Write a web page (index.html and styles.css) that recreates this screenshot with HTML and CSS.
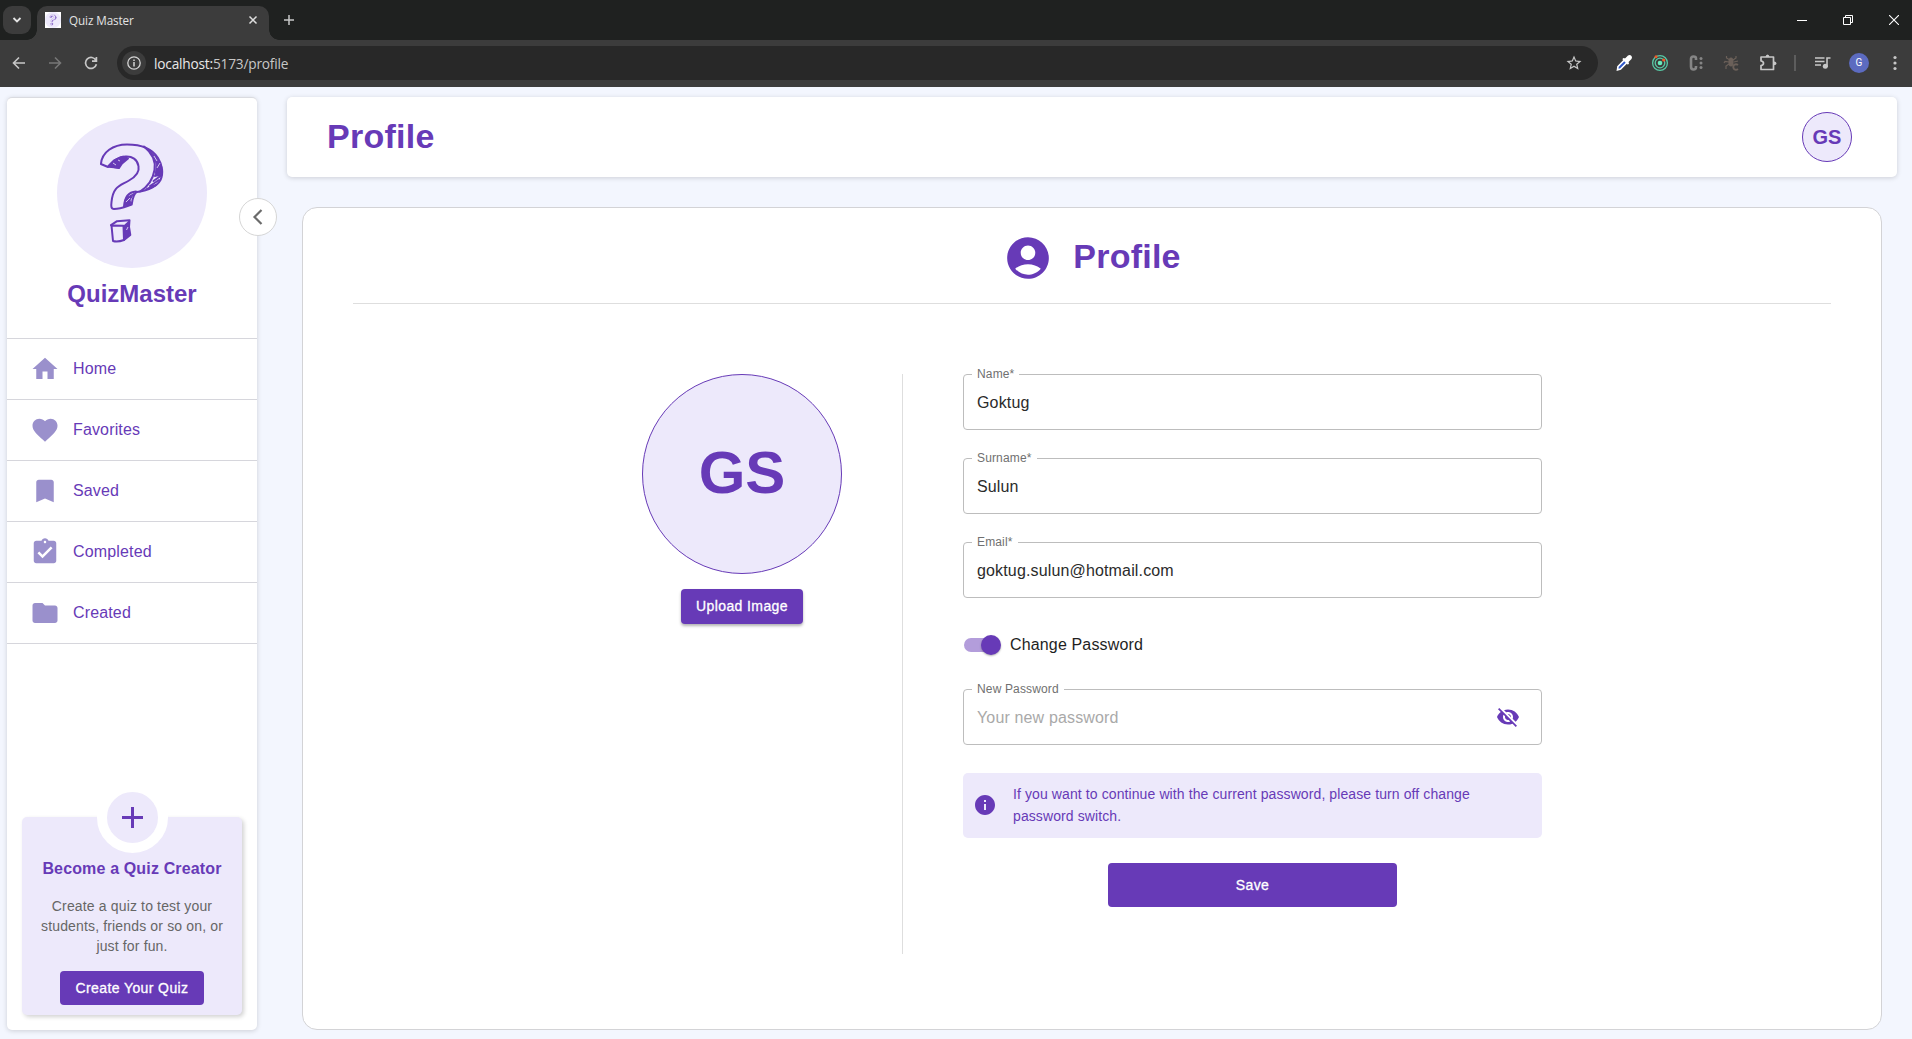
FILE: index.html
```html
<!DOCTYPE html>
<html lang="en">
<head>
<meta charset="utf-8">
<title>Quiz Master</title>
<link rel="stylesheet" href="styles.css">
</head>
<body>
<svg class="defs" aria-hidden="true">
  <symbol id="logo" viewBox="0 0 150 150">
    <circle cx="75" cy="75" r="75" fill="#ede9fb"/>
    <g fill="none" stroke="#673ab7" stroke-width="2" stroke-linejoin="round" stroke-linecap="round">
      <path d="M43.9 46C45 34 56 26.600 70 26.500C86 26.500 96 32 101 40C105.500 47 106.500 56 103.500 62C99 70 90 72.500 80 74C77 75 76.500 79 75.500 82L74.700 86.500C70 88 64 91 57 91C54 91 54 88 54.500 84C56 68 63 68 72 62.500C80 58 82.500 53 81.500 48C80.500 41.500 75 38 68.500 38.500C60 39 57 43 51 49Z"/>
      <path d="M87 28.500C95 35 99 43 97.500 52C96 61 92 68 83 73.500"/>
      <path d="M79 73.500C72 74 67.500 78 67 89"/>
      <path d="M51.500 48L57 42.500L66 38.700L71 40.500L65 45.500L62 50Z" fill="#673ab7"/>
      <path d="M52 48.700L62 49.700"/>
      <path d="M91 31L99 38.500L105 49L104 58L98 58L99.500 47L97 39Z" fill="#673ab7" stroke-width="1"/>
      <path d="M98 58L104.500 54M96.500 63L103.500 58M93 68L102 62M90 71L99 67" stroke-width="2"/>
      <path d="M69 80L77 75.500L73 82L74 86.500L67.500 88Z" fill="#673ab7" stroke-width="1"/>
      <path d="M54.500 107.500L66.500 107.800L67 122C63 123.500 59 124 56 123Z"/>
      <path d="M54 107.200L60 103.200L72.500 102.200L72 109L73.300 117L67 122"/>
      <path d="M67 108L72 103.500L72 117.500L67.500 121Z" fill="#673ab7" stroke-width="1.500"/>
    </g>
    <g stroke="#ede9fb" stroke-width=".8" fill="none">
      <path d="M56 45L59 47M61 42L63 43M97 38L100 43M100 50L103 45M69 84L73 80M69.500 112L71 109"/>
    </g>
  </symbol>
</svg>

<header class="browser">
  <div class="tabstrip">
    <button class="tab-search"><svg width="10" height="10" viewBox="0 0 10 10"><path d="M1.500 3L5 6.500L8.500 3" fill="none" stroke="#e3e3e3" stroke-width="1.800"/></svg></button>
    <div class="tab">
      <span class="favicon"><svg width="16" height="16"><use href="#logo"/></svg></span>
      <span class="tab-title">Quiz Master</span>
      <svg width="10" height="10" viewBox="0 0 10 10"><path d="M1.500 1.500L8.500 8.500M8.500 1.500L1.500 8.500" stroke="#dedede" stroke-width="1.500"/></svg>
    </div>
    <svg class="new-tab" width="12" height="12" viewBox="0 0 12 12"><path d="M6 1V11M1 6H11" stroke="#c7c7c7" stroke-width="1.500"/></svg>
    <div class="window-controls">
      <svg width="10" height="10" viewBox="0 0 10 10"><path d="M0 5.500H10" stroke="#fff"/></svg>
      <svg width="10" height="10" viewBox="0 0 10 10"><path d="M.5 2.500H7.500V9.500H.5ZM2.500 2.500V.5H9.500V7.500H7.500" fill="none" stroke="#fff"/></svg>
      <svg width="10" height="10" viewBox="0 0 10 10"><path d="M0 0L10 10M10 0L0 10" stroke="#fff" stroke-width="1.100"/></svg>
    </div>
  </div>
  <div class="toolbar">
    <div class="nav-buttons">
      <svg width="14" height="14" viewBox="0 0 14 14"><path d="M13 7H2M7 1.500L1.500 7L7 12.500" fill="none" stroke="#c7c7c7" stroke-width="1.600"/></svg>
      <svg width="14" height="14" viewBox="0 0 14 14"><path d="M1 7H12M7 1.500L12.500 7L7 12.500" fill="none" stroke="#777" stroke-width="1.600"/></svg>
      <svg width="14" height="14" viewBox="0 0 14 14"><path d="M12 4.500A5.500 5.500 0 1 0 12.400 8.300M12.400 1V5.200H8" fill="none" stroke="#c7c7c7" stroke-width="1.700"/></svg>
    </div>
    <div class="omnibox">
      <span class="site-info"><svg width="14" height="14" viewBox="0 0 14 14"><circle cx="7" cy="7" r="6.200" fill="none" stroke="#d5d5d5" stroke-width="1.300"/><path d="M7 6V10.500M7 3.400V5" stroke="#d5d5d5" stroke-width="1.500"/></svg></span>
      <span class="url">localhost:<span class="url-path">5173/profile</span></span>
      <svg width="18" height="18" viewBox="0 0 24 24" class="star"><path fill="#c7c7c7" d="m22 9.240-7.190-.62L12 2 9.190 8.630 2 9.240l5.460 4.730L5.820 21 12 17.270 18.180 21l-1.630-7.030zM12 15.400l-3.760 2.270 1-4.280-3.320-2.880 4.380-.38L12 6.100l1.710 4.040 4.380.38-3.320 2.880 1 4.280z"/></svg>
    </div>
    <div class="extensions">
      <svg width="18" height="18" viewBox="0 0 18 18"><path d="M3 12.500L10 5.500L12.500 8L5.500 15L2.500 15.800Z" fill="#2f58c9" stroke="#fff" stroke-width="1.600"/><path d="M8 4L10 4.500L13 1.500Q15 .5 16.500 2Q17.500 3.500 16.500 5L13.500 8L14 10L12.500 10.500L7.500 5.500Z" fill="#fff"/></svg>
      <svg width="18" height="18" viewBox="0 0 18 18"><g fill="none" stroke="#58c9a5" stroke-width="1.300"><circle cx="9" cy="9" r="7.400"/><circle cx="9" cy="9" r="4.800"/></g><circle cx="9" cy="9" r="2.300" fill="#68eaba"/><circle cx="5" cy="2.700" r="1.500" fill="#f05a28"/><circle cx="12.700" cy="6" r="1.600" fill="#f05a28"/></svg>
      <svg width="18" height="18" viewBox="0 0 18 18"><path d="M9 6V4.500Q9 2.500 6.500 2.500Q4 2.500 4 5V12.500Q4 15.500 6.500 15.500Q9 15.500 9 13V12" fill="none" stroke="#858585" stroke-width="2.600"/><g fill="#858585"><circle cx="14" cy="4.500" r="1.500"/><circle cx="14" cy="9" r="1.500"/><circle cx="14" cy="13.500" r="1.500"/></g></svg>
      <svg width="18" height="18" viewBox="0 0 18 18"><g fill="none" stroke="#6b6059" stroke-width="1.200"><path d="M7 6L3.500 4V2M6 8L2 7.500L1 9M6 10L3 12V15M10 6L13 4V2M11 8L15 7"/><path d="M15 11Q13 9.500 11 11Q9.500 13 11 15Q13 16.500 15 15" stroke-width="1.800"/></g><ellipse cx="8" cy="8" rx="2.600" ry="4.500" fill="#6b6059"/></svg>
      <svg width="18" height="18" viewBox="0 0 18 18"><path d="M2 3H14.500V15.500H2V11.500Q4.500 11 4.500 9.200Q4.500 7.300 2 7Z" fill="none" stroke="#c7c7c7" stroke-width="1.700" stroke-linejoin="round"/><path d="M6.500 3Q6.800.5 8.500.5Q10.300.5 10.500 3ZM14.500 7.200Q17.500 7.500 17.500 9.200Q17.500 11 14.500 11.200Z" fill="#c7c7c7"/></svg>
    </div>
    <i class="toolbar-divider"></i>
    <svg class="media" width="16" height="14" viewBox="0 0 16 14"><path d="M0 2H9.500M0 5.500H9.500M0 9H6M12 11V2H15.500" fill="none" stroke="#c7c7c7" stroke-width="1.600"/><circle cx="10.300" cy="10.300" r="2.500" fill="#c7c7c7"/></svg>
    <span class="account">G</span>
    <svg width="4" height="16" viewBox="0 0 4 16" fill="#c7c7c7"><circle cx="2" cy="2.500" r="1.600"/><circle cx="2" cy="8" r="1.600"/><circle cx="2" cy="13.500" r="1.600"/></svg>
  </div>
</header>

<div class="app">
  <aside class="sidebar">
    <div class="brand">
      <svg width="150" height="150"><use href="#logo"/></svg>
      <h2>QuizMaster</h2>
    </div>
    <nav class="menu">
      <a><svg viewBox="0 0 24 24"><path d="M10 20v-6h4v6h5v-8h3L12 3 2 12h3v8z"/></svg>Home</a>
      <a><svg viewBox="0 0 24 24"><path d="m12 21.350-1.450-1.320C5.400 15.360 2 12.280 2 8.500 2 5.420 4.420 3 7.500 3c1.740 0 3.410.81 4.500 2.090C13.090 3.810 14.760 3 16.500 3 19.580 3 22 5.420 22 8.500c0 3.780-3.400 6.860-8.550 11.540z"/></svg>Favorites</a>
      <a><svg viewBox="0 0 24 24"><path d="M17 3H7c-1.100 0-1.990.9-1.990 2L5 21l7-3 7 3V5c0-1.100-.9-2-2-2"/></svg>Saved</a>
      <a><svg viewBox="0 0 24 24"><path d="M19 3h-4.180C14.400 1.840 13.300 1 12 1c-1.300 0-2.400.84-2.820 2H5c-1.100 0-2 .9-2 2v14c0 1.100.9 2 2 2h14c1.100 0 2-.9 2-2V5c0-1.100-.9-2-2-2m-7 0c.55 0 1 .45 1 1s-.45 1-1 1-1-.45-1-1 .45-1 1-1m-2 14-4-4 1.410-1.410L10 14.170l6.590-6.590L18 9z"/></svg>Completed</a>
      <a><svg viewBox="0 0 24 24"><path d="M10 4H4c-1.100 0-1.990.9-1.990 2L2 18c0 1.100.9 2 2 2h16c1.100 0 2-.9 2-2V8c0-1.100-.9-2-2-2h-8z"/></svg>Created</a>
    </nav>
    <section class="creator">
      <span class="creator-plus"><svg width="21" height="21" viewBox="0 0 21 21"><path d="M10.500 0V21M0 10.500H21" stroke="#673ab7" stroke-width="3"/></svg></span>
      <h3>Become a Quiz Creator</h3>
      <p>Create a quiz to test your students, friends or so on, or just for fun.</p>
      <button class="btn btn-create">Create Your Quiz</button>
    </section>
    <button class="collapse"><svg width="12" height="18" viewBox="0 0 12 18"><path d="M9.500 2L2.500 9L9.500 16" fill="none" stroke="#6b6b6b" stroke-width="2.200"/></svg></button>
  </aside>

  <main class="content">
    <div class="topbar">
      <h1>Profile</h1>
      <span class="avatar avatar-small">GS</span>
    </div>
    <section class="card">
      <div class="card-title">
        <svg width="50" height="50" viewBox="0 0 24 24"><path fill="#673ab7" d="M12 2C6.480 2 2 6.480 2 12s4.480 10 10 10 10-4.480 10-10S17.520 2 12 2m0 4c1.930 0 3.500 1.570 3.500 3.500S13.930 13 12 13s-3.500-1.570-3.500-3.500S10.070 6 12 6m0 14c-2.030 0-4.430-.82-6.140-2.880C7.550 15.800 9.680 15 12 15s4.450.8 6.140 2.120C16.430 19.180 14.030 20 12 20"/></svg>
        <h1>Profile</h1>
      </div>
      <div class="card-body">
        <div class="photo">
          <span class="avatar avatar-large">GS</span>
          <button class="btn btn-upload">Upload Image</button>
        </div>
        <form class="form">
          <div class="field"><label>Name*</label><span>Goktug</span></div>
          <div class="field"><label>Surname*</label><span>Sulun</span></div>
          <div class="field"><label>Email*</label><span>goktug.sulun@hotmail.com</span></div>
          <div class="toggle"><span class="switch"></span>Change Password</div>
          <div class="field"><label>New Password</label><span class="placeholder">Your new password</span>
            <svg width="24" height="24" viewBox="0 0 24 24"><path fill="#673ab7" d="M12 7c2.760 0 5 2.240 5 5 0 .65-.13 1.260-.36 1.830l2.920 2.920c1.510-1.260 2.700-2.890 3.430-4.750-1.730-4.390-6-7.500-11-7.500-1.400 0-2.740.25-3.980.7l2.160 2.160C10.740 7.130 11.350 7 12 7M2 4.270l2.280 2.280.46.46C3.080 8.300 1.780 10.020 1 12c1.730 4.390 6 7.500 11 7.500 1.550 0 3.030-.3 4.380-.84l.42.42L19.730 22 21 20.730 3.270 3zM7.530 9.800l1.550 1.550c-.05.21-.08.43-.08.65 0 1.660 1.340 3 3 3 .22 0 .44-.03.65-.08l1.550 1.550c-.67.33-1.410.53-2.200.53-2.760 0-5-2.240-5-5 0-.79.2-1.530.53-2.200m4.310-.78 3.150 3.150.02-.16c0-1.660-1.340-3-3-3z"/></svg>
          </div>
          <div class="alert">
            <svg width="24" height="24" viewBox="0 0 24 24"><path fill="#673ab7" d="M12 2C6.480 2 2 6.480 2 12s4.480 10 10 10 10-4.480 10-10S17.520 2 12 2m1 15h-2v-6h2zm0-8h-2V7h2z"/></svg>
            <p>If you want to continue with the current password, please turn off change password switch.</p>
          </div>
          <button class="btn btn-save" type="button">Save</button>
        </form>
      </div>
    </section>
  </main>
</div>
</body>
</html>
```
FILE: styles.css
```css
* { box-sizing: border-box; }

body {
  margin: 0;
  height: 1039px;
  overflow: hidden;
  display: flex;
  flex-direction: column;
  background: #f3f6fe;
  font-family: "Liberation Sans", Arial, sans-serif;
  font-size: 16px;
}

h1, h2, h3, p { margin: 0; }
button { border: 0; padding: 0; font-family: inherit; }
svg { display: block; flex: none; }
.defs { position: absolute; width: 0; height: 0; }

/* Browser frame */
.browser { flex: none; height: 87px; font-family: "Open Sans", "Noto Sans", sans-serif; }
.tabstrip {
  height: 40px;
  display: flex;
  align-items: center;
  background: #1f2120;
  padding-left: 3px;
}
.tab-search {
  width: 28px;
  height: 28px;
  border-radius: 9px;
  background: #3c3c3c;
  display: grid;
  place-items: center;
}
.tab {
  position: relative;
  align-self: flex-end;
  width: 232px;
  height: 34px;
  margin-left: 6px;
  padding: 0 11px 6px 8px;
  display: flex;
  align-items: center;
  background: #3c3c3c;
  border-radius: 10px 10px 0 0;
}
.tab::before, .tab::after {
  content: "";
  position: absolute;
  bottom: 0;
  width: 10px;
  height: 10px;
}
.tab::before { left: -10px; background: radial-gradient(circle at 0 0, transparent 9.5px, #3c3c3c 10px); }
.tab::after { right: -10px; background: radial-gradient(circle at 100% 0, transparent 9.5px, #3c3c3c 10px); }
.favicon { background: #fff; }
.tab-title { flex: 1; margin-left: 8px; font-size: 11.7px; line-height: 16px; color: #e3e3e3; letter-spacing: -.1px; }
.new-tab { margin-left: 14px; }
.window-controls { margin-left: auto; display: flex; gap: 36px; padding-right: 13px; }

.toolbar {
  height: 47px;
  display: flex;
  align-items: center;
  background: #3c3c3c;
  padding: 0 15px 1px 12px;
}
.nav-buttons { display: flex; gap: 22px; }
.omnibox {
  flex: 1;
  height: 34px;
  margin-left: 19px;
  padding: 0 15px 0 5px;
  border-radius: 17px;
  background: #282828;
  display: flex;
  align-items: center;
}
.site-info {
  width: 24px;
  height: 24px;
  border-radius: 50%;
  background: #3c3c3c;
  display: grid;
  place-items: center;
}
.url { flex: 1; margin-left: 8px; font-size: 13.7px; color: #e8e8e8; letter-spacing: -.2px; }
.url-path { color: #c7c7c7; }
.extensions { display: flex; gap: 18px; margin-left: 17px; }
.toolbar-divider { width: 2px; height: 16px; background: #5d5d5d; margin-left: 17px; }
.media { margin-left: 19px; }
.account {
  width: 20px;
  height: 20px;
  margin: 0 24px 0 18px;
  border-radius: 50%;
  background: #5c6bc0;
  color: #fff;
  font: 10px/20px Roboto, sans-serif;
  text-align: center;
}

/* Application shell */
.app { flex: 1; display: flex; gap: 30px; padding: 10px 15px 9px 7px; }

.sidebar {
  position: relative;
  width: 250px;
  display: flex;
  flex-direction: column;
  background: #fff;
  border-top: 1px solid #dadbe0;
  border-radius: 5px;
  box-shadow: 0 1px 5px rgba(0, 0, 0, .16);
}
.brand {
  height: 241px;
  padding-top: 20px;
  display: flex;
  flex-direction: column;
  align-items: center;
  border-bottom: 1px solid #d6d6dc;
}
.brand h2 { margin-top: 10px; font-size: 24px; line-height: 32px; color: #673ab7; }
.menu a {
  height: 61px;
  padding-left: 23px;
  display: flex;
  align-items: center;
  gap: 13px;
  border-bottom: 1px solid #d6d6dc;
  color: #673ab7;
  letter-spacing: .15px;
}
.menu svg { width: 30px; height: 30px; fill: #9a90cc; }
.collapse {
  position: absolute;
  left: 232px;
  top: 100px;
  width: 38px;
  height: 38px;
  border: 1px solid #d6d6d6;
  border-radius: 50%;
  background: #fff;
  display: grid;
  place-items: center;
}
.creator {
  position: relative;
  width: 220px;
  height: 198px;
  margin: auto auto 15px;
  padding: 45px 17px 10px;
  display: flex;
  flex-direction: column;
  align-items: center;
  text-align: center;
  background: #ede9fb;
  border-radius: 5px;
  box-shadow: 2px 2px 4px rgba(0, 0, 0, .18);
}
.creator-plus {
  position: absolute;
  left: 74.5px;
  top: -35px;
  width: 71px;
  height: 71px;
  border: 10px solid #fff;
  border-radius: 50%;
  background: #ede9fb;
  display: grid;
  place-items: center;
}
.creator h3 { font-size: 16px; line-height: 14px; color: #673ab7; letter-spacing: .15px; white-space: nowrap; }
.creator p { margin-top: 20px; font-size: 14px; line-height: 20px; letter-spacing: .15px; color: #666; }

.btn {
  border-radius: 4px;
  background: #673ab7;
  color: #fff;
  font-size: 14px;
  letter-spacing: .4px;
  white-space: nowrap;
  -webkit-text-stroke: .3px #fff;
}
.btn-create { flex: none; width: 144px; height: 34px; margin-top: auto; }
.btn-upload { width: 122px; height: 35px; padding-bottom: 2px; box-shadow: 0 2px 3px rgba(0, 0, 0, .3); }
.btn-save { display: block; width: 289px; height: 44px; margin: 25px auto 0; }

/* Page content */
.content { flex: 1; display: flex; flex-direction: column; gap: 30px; }
h1 { font-size: 34px; line-height: 42px; letter-spacing: .25px; color: #673ab7; }
.topbar {
  flex: none;
  height: 80px;
  padding: 0 45px 0 40px;
  display: flex;
  align-items: center;
  justify-content: space-between;
  background: #fff;
  border-radius: 5px;
  box-shadow: 0 1px 5px rgba(0, 0, 0, .16);
}
.topbar h1 { padding-bottom: 3px; }
.avatar {
  display: grid;
  place-items: center;
  border: 1px solid #673ab7;
  border-radius: 50%;
  background: #ede9fb;
  color: #673ab7;
  font-weight: 700;
}
.avatar-small { width: 50px; height: 50px; font-size: 20px; }
.avatar-large { width: 200px; height: 200px; padding-bottom: 3px; font-size: 60px; }

.card {
  flex: 1;
  margin: 0 15px;
  padding: 25px 50px 0;
  background: #fff;
  border: 1px solid #d3d3d6;
  border-radius: 15px;
}
.card-title {
  height: 71px;
  display: flex;
  justify-content: center;
  gap: 20px;
  border-bottom: 1px solid #dedede;
}
.card-title h1 { line-height: 47px; }
.card-body { margin: 70px 0 0 289px; display: flex; }
.photo {
  width: 261px;
  height: 580px;
  display: flex;
  flex-direction: column;
  align-items: center;
  gap: 15px;
  padding-right: 60px;
  border-right: 1px solid #dedede;
}
.form { width: 579px; margin-left: 60px; }
.field {
  position: relative;
  height: 56px;
  margin-bottom: 28px;
  padding: 0 21px 0 13px;
  display: flex;
  align-items: center;
  justify-content: space-between;
  border: 1px solid #bdbdbd;
  border-radius: 4px;
  color: #2b2b2b;
  letter-spacing: .15px;
}
.field span { padding-top: 2px; }
.field label {
  position: absolute;
  left: 8px;
  top: -8px;
  padding: 0 5px;
  background: #fff;
  font-size: 12px;
  line-height: 14px;
  color: #707070;
}
.field .placeholder { color: #a9a9a9; }
.toggle {
  height: 38px;
  margin-bottom: 25px;
  padding-left: 1px;
  display: flex;
  align-items: center;
  gap: 9px;
  letter-spacing: .15px;
  color: #1f1f1f;
}
.switch {
  width: 37px;
  height: 20px;
  display: flex;
  align-items: center;
  justify-content: flex-end;
  background: linear-gradient(#b39ddb, #b39ddb) 15px 3px / 12px 14px no-repeat;
}
.switch::before { content: ""; width: 17px; height: 14px; border-radius: 7px 0 0 7px; background: #b39ddb; }
.switch::after { content: ""; width: 20px; height: 20px; border-radius: 50%; background: #673ab7; box-shadow: 0 1px 2px rgba(0, 0, 0, .3); }
.alert {
  height: 65px;
  padding: 0 10px 2px;
  display: flex;
  align-items: center;
  gap: 16px;
  border-radius: 5px;
  background: #ede9fb;
  color: #673ab7;
}
.alert p { font-size: 14px; line-height: 22px; letter-spacing: .1px; }
```
